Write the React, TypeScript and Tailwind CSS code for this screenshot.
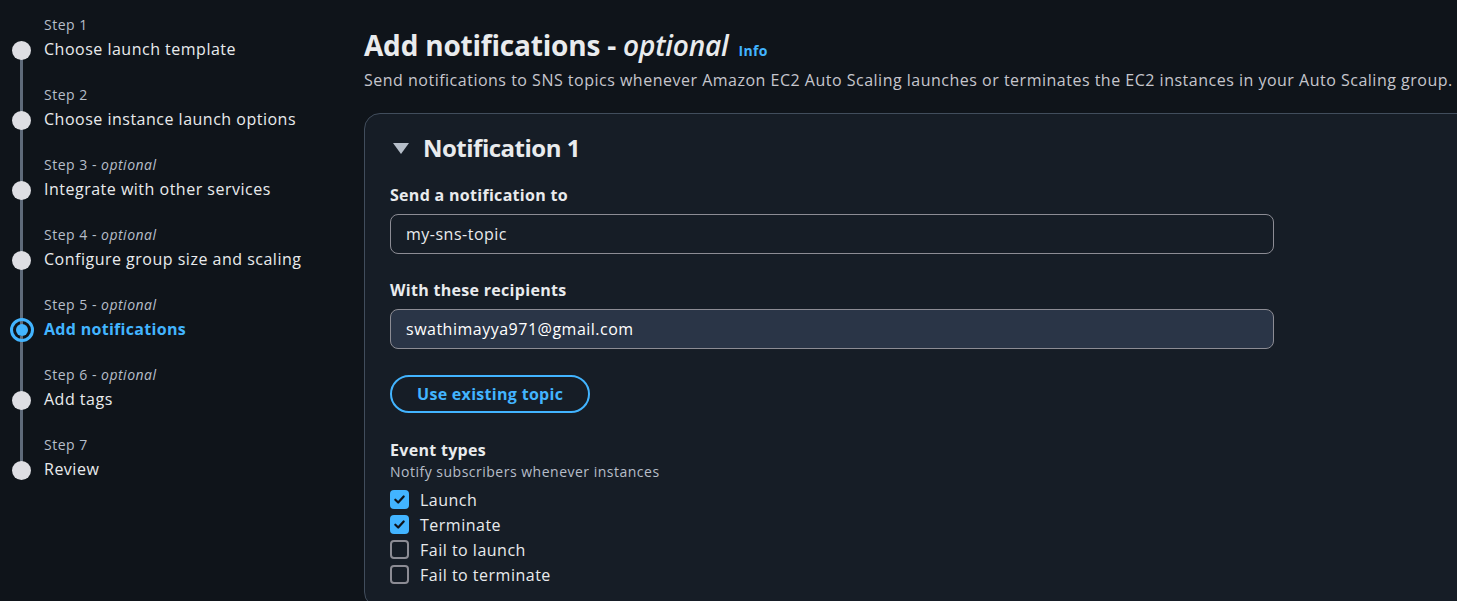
import { useState } from "react";

const steps = [
  { label: "Step 1", title: "Choose launch template" },
  { label: "Step 2", title: "Choose instance launch options" },
  { label: "Step 3", optional: true, title: "Integrate with other services" },
  { label: "Step 4", optional: true, title: "Configure group size and scaling" },
  { label: "Step 5", optional: true, title: "Add notifications", active: true },
  { label: "Step 6", optional: true, title: "Add tags" },
  { label: "Step 7", title: "Review" },
];

function Sidebar() {
  return (
    <nav className="w-[364px] shrink-0 pt-[16px] pl-[11px]">
      {steps.map((s, i) => (
        <div key={s.label} className="flex">
          <div className="relative w-[33px] shrink-0">
            {i > 0 && <div className="absolute left-[9px] top-0 h-[32px] w-[3px] bg-[#5f6b7a]" />}
            {i < steps.length - 1 && <div className="absolute left-[9px] top-[40px] bottom-0 w-[3px] bg-[#5f6b7a]" />}
            {s.active ? (
              <div className="absolute left-[-1px] top-[22px] flex h-[24px] w-[24px] items-center justify-center rounded-full border-[3px] border-[#42b4ff]">
                <div className="h-[12px] w-[12px] rounded-full bg-[#42b4ff]" />
              </div>
            ) : (
              <div className="absolute left-[1px] top-[25px] h-[19px] w-[19px] rounded-full bg-[#dedee3]" />
            )}
          </div>
          <div className="pb-[22px]">
            <div className="text-[14px] leading-[18px] text-[#b6bec9]">
              {s.label}
              {s.optional && (
                <>
                  {" - "}
                  <i>optional</i>
                </>
              )}
            </div>
            <div
              className={`text-[16px] leading-[30px] ${
                s.active ? "font-bold tracking-[0.3px] text-[#42b4ff]" : "text-[#e9ebed]"
              }`}
            >
              {s.title}
            </div>
          </div>
        </div>
      ))}
    </nav>
  );
}

function Checkbox({ checked, label, onToggle }: { checked: boolean; label: string; onToggle: () => void }) {
  return (
    <label className="flex h-[25px] cursor-pointer items-center gap-[11px]" onClick={onToggle}>
      {checked ? (
        <span className="flex h-[19px] w-[19px] items-center justify-center rounded-[4px] bg-[#42b4ff]">
          <svg width="13" height="13" viewBox="0 0 14 14" fill="none">
            <path d="M2.5 7.2 5.6 10.2 11.5 3.8" stroke="#0f141a" strokeWidth="2.4" strokeLinecap="round" strokeLinejoin="round" />
          </svg>
        </span>
      ) : (
        <span className="h-[19px] w-[19px] rounded-[4px] border-2 border-[#8c8c94]" />
      )}
      <span className="text-[16px] text-[#e9ebed]">{label}</span>
    </label>
  );
}

export default function App() {
  const [events, setEvents] = useState([true, true, false, false]);
  const names = ["Launch", "Terminate", "Fail to launch", "Fail to terminate"];
  return (
    <div
      className="flex h-[601px] w-full overflow-hidden bg-[#0f141a] tracking-[0.5px] text-[#e9ebed]"
      style={{ fontFamily: '"Open Sans", "Noto Sans", sans-serif' }}
    >
      <Sidebar />
      <main className="min-w-0 flex-1 pt-[27px]">
        <div className="flex items-baseline gap-[10px]">
          <h1 className="text-[28px] font-bold leading-[36px] tracking-[-0.2px] text-[#e9ebed]">
            Add notifications - <i className="font-semibold">optional</i>
          </h1>
          <span className="text-[14px] font-bold tracking-[0.3px] text-[#42b4ff]">Info</span>
        </div>
        <p className="mt-[5px] whitespace-nowrap text-[16px] leading-[24px] text-[#c6c6cd]">
          Send notifications to SNS topics whenever Amazon EC2 Auto Scaling launches or terminates the EC2 instances in your Auto Scaling group.
        </p>
        <section className="mt-[21px] w-[1200px] rounded-[16px] border border-[#414d5c] bg-[#161d26] pl-[25px] pt-[16px] pb-[20px]">
          <div className="flex items-center gap-[13px]">
            <svg width="18" height="14" viewBox="0 0 18 14" className="ml-[2px]">
              <path d="M1 2h16L9 13z" fill="#b6bec9" />
            </svg>
            <h2 className="text-[24px] font-bold leading-[36px] tracking-[-0.5px] text-[#e9ebed]">Notification 1</h2>
          </div>
          <div className="mt-[18px] text-[16px] font-bold leading-[22px] tracking-[0.3px]">Send a notification to</div>
          <div className="mt-[8px] flex h-[40px] w-[884px] items-center rounded-[8px] border border-[#8c8c94] px-[15px] text-[16px] text-[#e9ebed]">
            my-sns-topic
          </div>
          <div className="mt-[25px] text-[16px] font-bold leading-[22px] tracking-[0.3px]">With these recipients</div>
          <div className="mt-[8px] flex h-[40px] w-[884px] items-center rounded-[8px] border border-[#8c8c94] bg-[#2a3547] px-[15px] text-[16px] text-[#ffffff]">
            swathimayya971@gmail.com
          </div>
          <button className="mt-[26px] h-[38px] rounded-full border-2 border-[#42b4ff] px-[25px] text-[16px] font-bold tracking-[0.3px] text-[#42b4ff]">
            Use existing topic
          </button>
          <div className="mt-[26px] text-[16px] font-bold leading-[22px] tracking-[0.3px]">Event types</div>
          <div className="mt-[1px] text-[14px] leading-[20px] text-[#b6bec9]">Notify subscribers whenever instances</div>
          <div className="mt-[5px]">
            {names.map((n, i) => (
              <Checkbox
                key={n}
                label={n}
                checked={events[i]}
                onToggle={() => setEvents(events.map((v, j) => (j === i ? !v : v)))}
              />
            ))}
          </div>
        </section>
      </main>
    </div>
  );
}
